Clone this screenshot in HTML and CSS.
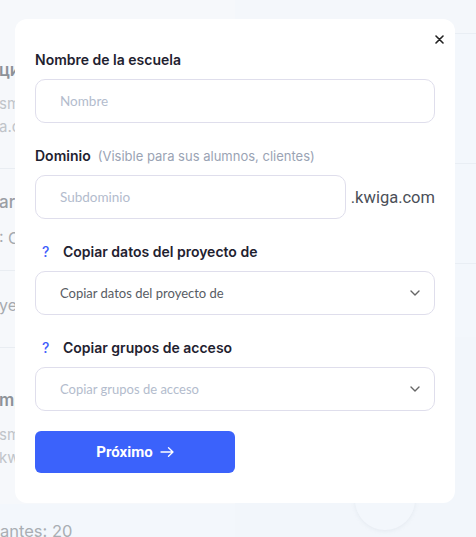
FILE: index.html
```html
<!DOCTYPE html>
<html lang="es">
<head>
<meta charset="utf-8">
<title>Nueva escuela</title>
<link rel="stylesheet" href="styles.css">
</head>
<body>
<div class="page">
  <div class="col-left">
    <div class="sec sec1">
      <div class="t-h">ции</div>
      <div class="t-s gap14">smtp</div>
      <div class="t-s gap3">a.com</div>
    </div>
    <div class="sec sec2">
      <div class="t-h2">ar</div>
      <div class="t-m gap16">: C</div>
    </div>
    <div class="sec sec3">
      <div class="t-m">ye</div>
    </div>
    <div class="sec sec4">
      <div class="t-h">mp</div>
      <div class="t-s gap15">sm</div>
      <div class="t-s gap3">kw</div>
    </div>
    <div class="t-bottom">antes: 20</div>
  </div>
  <div class="col-right">
    <div class="r r1"></div>
    <div class="r r2"></div>
    <div class="r r3"></div>
    <div class="r r4"></div>
    <div class="r5"><div class="circle"><span class="tick"></span></div></div>
  </div>
</div>

<div class="modal">
  <button class="close" aria-label="Cerrar">
    <svg width="9" height="9" viewBox="0 0 9 9"><path d="M1 1L8 8M8 1L1 8" stroke="#222" stroke-width="1.6" stroke-linecap="round"/></svg>
  </button>

  <div class="field">
    <div class="label">Nombre de la escuela</div>
    <input class="input" type="text" placeholder="Nombre">
  </div>

  <div class="field">
    <div class="label">Dominio <span class="hint">(Visible para sus alumnos, clientes)</span></div>
    <div class="domain-row">
      <input class="input grow" type="text" placeholder="Subdominio">
      <span class="suffix">.kwiga.com</span>
    </div>
  </div>

  <div class="field">
    <div class="label"><span class="q">?</span>Copiar datos del proyecto de</div>
    <div class="select">
      <span class="sel-val">Copiar datos del proyecto de</span>
      <svg class="chev" width="10" height="6" viewBox="0 0 10 6"><path d="M1 1L5 5L9 1" fill="none" stroke="#666" stroke-width="1.4" stroke-linecap="round" stroke-linejoin="round"/></svg>
    </div>
  </div>

  <div class="field">
    <div class="label"><span class="q">?</span>Copiar grupos de acceso</div>
    <div class="select">
      <span class="sel-ph">Copiar grupos de acceso</span>
      <svg class="chev" width="10" height="6" viewBox="0 0 10 6"><path d="M1 1L5 5L9 1" fill="none" stroke="#666" stroke-width="1.4" stroke-linecap="round" stroke-linejoin="round"/></svg>
    </div>
  </div>

  <button class="next">Próximo
    <svg width="14" height="10" viewBox="0 0 14 10"><path d="M1 5H13M8.5 0.8L13 5L8.5 9.2" fill="none" stroke="#fff" stroke-width="1.3" stroke-linecap="round" stroke-linejoin="round"/></svg>
  </button>
</div>
</body>
</html>
```

FILE: styles.css
```css
* { box-sizing: border-box; }
html, body { margin: 0; padding: 0; }
body {
  width: 476px;
  height: 537px;
  overflow: hidden;
  background: #f3f7fc;
  font-family: Inter, "Noto Sans", sans-serif;
  position: relative;
}

/* background page */
.page {
  display: flex;
  height: 537px;
}
.col-left {
  width: 235px;
  white-space: nowrap;
  overflow: hidden;
}
.sec { border-bottom: 1px solid #e9edf2; background: #f6f8fb; }
.sec1 { height: 169px; padding-top: 60px; }
.sec2 { height: 102px; padding-top: 23px; }
.sec3 { height: 77px; padding-top: 24px; }
.sec4 { height: 156px; padding-top: 42px; border-bottom: 0; }
.t-h, .t-h2, .t-s, .t-m, .t-bottom {
  line-height: 20px;
}
.t-h { font-size: 17px; font-weight: 600; color: #8d9298; margin-left: -1px; }
.t-h2 { font-size: 17px; font-weight: 500; color: #9a9ea4; margin-left: -1px; }
.t-s { font-size: 15px; color: #c0c4c9; margin-left: -1px; }
.t-m { font-size: 16px; color: #a6aaaf; margin-left: -1px; }
.t-bottom { font-size: 16.5px; color: #a9aeb3; padding-top: 17px; }
.gap14 { margin-top: 14px; }
.gap3 { margin-top: 3px; }
.gap16 { margin-top: 16px; }
.gap15 { margin-top: 15px; }

.col-right { flex: 1; display: flex; flex-direction: column; }
.r { border-bottom: 1px solid #e9eef4; }
.r1 { height: 34px; background: #f4f7fb; }
.r2 { height: 130px; }
.r3 { height: 100px; }
.r4 { height: 73px; border-bottom: 0; }
.r5 { flex: 1; background: #f2f6fb; padding: 133px 0 0 120px; }
.circle {
  width: 60px;
  height: 60px;
  border-radius: 50%;
  background: #f3f7fc;
  box-shadow: 0 1px 4px rgba(150, 160, 180, 0.14);
  display: flex;
  justify-content: center;
  padding-top: 18px;
}
.tick { width: 2px; height: 14px; background: #a9bdf8; }

/* modal */
.modal {
  position: absolute;
  left: 15px;
  top: 19px;
  width: 440px;
  background: #fff;
  border-radius: 12px;
  padding: 31px 20px 30px;
  display: flex;
  flex-direction: column;
}
.close {
  position: absolute;
  top: 16px;
  right: 11px;
  width: 9px;
  height: 9px;
  padding: 0;
  border: 0;
  background: none;
  display: flex;
}
.field { margin-bottom: 23px; }
.field:last-of-type { margin-bottom: 20px; }
.label {
  font-size: 14px;
  font-weight: 600;
  line-height: 20px;
  color: #1f2230;
  margin-bottom: 9px;
  display: flex;
  align-items: baseline;
}
.hint {
  font-weight: 400;
  font-size: 13px;
  color: #9aa3b4;
  margin-left: 7px;
}
.q {
  font-weight: 500;
  color: #3f5efb;
  padding-left: 7px;
  width: 28px;
}
.input {
  display: block;
  width: 100%;
  height: 44px;
  border: 1px solid #dfdeec;
  border-radius: 10px;
  padding: 0 24px;
  font-family: Lato, "Noto Sans", sans-serif;
  font-size: 13.5px;
  color: #333;
  background: #fff;
  outline: none;
}
.input::placeholder { color: #b3bccd; }
.domain-row { display: flex; align-items: center; gap: 5px; }
.grow { flex: 1; width: auto; min-width: 0; }
.suffix {
  font-family: Roboto, "Noto Sans", sans-serif;
  font-size: 16.5px;
  color: #4b4f58;
}
.select {
  height: 44px;
  border: 1px solid #dfdeec;
  border-radius: 10px;
  padding: 0 14px 0 24px;
  display: flex;
  align-items: center;
  justify-content: space-between;
  font-family: Lato, "Noto Sans", sans-serif;
  font-size: 13px;
}
.sel-val { color: #585c64; }
.sel-ph { color: #b3bccd; }
.next {
  width: 200px;
  height: 42px;
  border: 0;
  border-radius: 6px;
  background: #3b62fb;
  color: #fff;
  font-family: Roboto, "Noto Sans", sans-serif;
  font-weight: 700;
  font-size: 15px;
  display: flex;
  align-items: center;
  justify-content: center;
  gap: 7px;
  padding: 0;
}
```
